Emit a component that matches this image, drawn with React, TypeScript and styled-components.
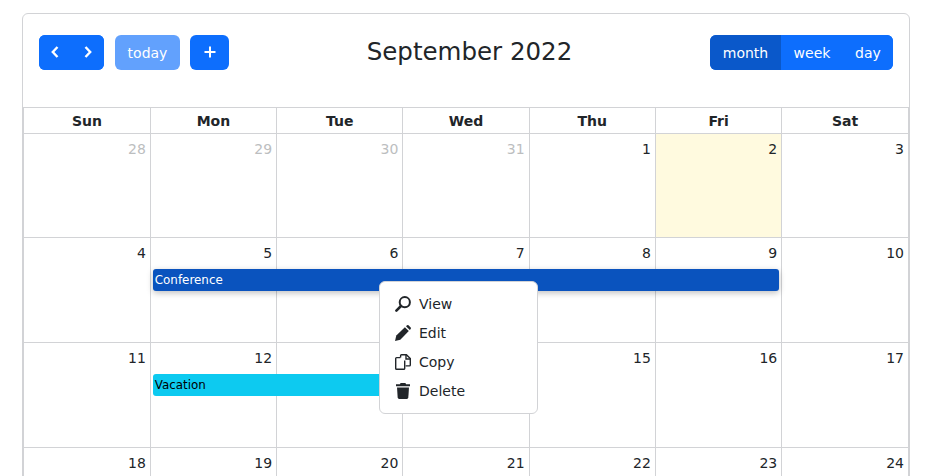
import React from 'react';
import styled, { createGlobalStyle } from 'styled-components';

const GlobalStyle = createGlobalStyle`
  html, body {
    margin: 0;
    height: 476px;
    overflow: hidden;
    background: #fff;
    font-family: 'DejaVu Sans', sans-serif;
    color: #212529;
  }
`;

const weeks = [
  [28, 29, 30, 31, 1, 2, 3],
  [4, 5, 6, 7, 8, 9, 10],
  [11, 12, 13, 14, 15, 16, 17],
  [18, 19, 20, 21, 22, 23, 24],
];
const dayNames = ['Sun', 'Mon', 'Tue', 'Wed', 'Thu', 'Fri', 'Sat'];

// table columns snap unevenly in the original, first and last take up the slack
const columns = '125.8px repeat(5, 126.29px) 1fr';
const line = '#d2d3d6';

const ChevronLeft = () => (
  <svg width="10" height="14" viewBox="0 0 10 14" fill="none" stroke="currentColor" strokeWidth="2.4">
    <path d="M7.5 2 L2.8 7 L7.5 12" />
  </svg>
);
const ChevronRight = () => (
  <svg width="10" height="14" viewBox="0 0 10 14" fill="none" stroke="currentColor" strokeWidth="2.4">
    <path d="M2.5 2 L7.2 7 L2.5 12" />
  </svg>
);
const Plus = () => (
  <svg width="12" height="12" viewBox="0 0 12 12" stroke="currentColor" strokeWidth="2">
    <path d="M6 0.5 V11.5 M0.5 6 H11.5" />
  </svg>
);
const SearchIcon = () => (
  <svg viewBox="0 0 16 16" fill="none" stroke="#212529">
    <circle cx="9.8" cy="6.2" r="5.1" strokeWidth="2" />
    <path d="M6 10 L1.4 14.6" strokeWidth="2.6" strokeLinecap="round" />
  </svg>
);
const PencilIcon = () => (
  <svg viewBox="0 0 16 16" fill="#212529">
    <path d="M0 16 L1.3 10.6 L9.9 2.2 L13.8 6.1 L5.3 14.7 Z" />
    <path d="M11 1.2 L12 0.3 Q12.8 -0.2 13.5 0.3 L15.7 2.5 Q16.2 3.2 15.7 3.9 L14.8 4.9 Z" />
  </svg>
);
const CopyIcon = () => (
  <svg viewBox="0 0 16 16" fill="none" stroke="#212529" strokeWidth="1.4">
    <path d="M5.6 3.4 V1.6 Q5.6 0.7 6.5 0.7 H11.4 L15.3 4.6 V11 Q15.3 11.9 14.4 11.9 H10.6" />
    <path d="M11 0.9 V5 H15.2" />
    <path d="M5.4 3.6 H1.6 Q0.7 3.6 0.7 4.5 V14.4 Q0.7 15.3 1.6 15.3 H8.8 Q9.7 15.3 9.7 14.4 V6.6" />
  </svg>
);
const TrashIcon = () => (
  <svg viewBox="0 0 16 16" fill="#212529">
    <path d="M5.6 0 H10.4 L11.1 1.3 H15 V3.2 H1 V1.3 H4.9 Z" />
    <path d="M2 4.4 H14 L13.3 14.6 Q13.2 16 11.8 16 H4.2 Q2.8 16 2.7 14.6 Z" />
  </svg>
);

const App = () => {
  return (
    <>
      <GlobalStyle />
      <Card>
        <Toolbar>
          <ToolGroup>
            <ButtonGroup>
              <IconButton><ChevronLeft /></IconButton>
              <IconButton><ChevronRight /></IconButton>
            </ButtonGroup>
            <TodayButton>today</TodayButton>
            <AddButton><Plus /></AddButton>
          </ToolGroup>
          <Title>September 2022</Title>
          <ButtonGroup>
            <ViewButton $width={71} $active>month</ViewButton>
            <ViewButton $width={62}>week</ViewButton>
            <ViewButton $width={50}>day</ViewButton>
          </ButtonGroup>
        </Toolbar>
        <Calendar>
          <HeaderRow>
            {dayNames.map((d) => (
              <HeaderCell key={d}>{d}</HeaderCell>
            ))}
          </HeaderRow>
          {weeks.map((days, w) => (
            <Week key={w}>
              {days.map((d, i) => (
                <DayCell
                  key={d}
                  $col={i + 1}
                  $today={w === 0 && d === 2}
                  $muted={w === 0 && d > 20}
                >
                  {d}
                </DayCell>
              ))}
              {w === 1 && <EventBar $start={2} $span={5} $kind="conference">Conference</EventBar>}
              {w === 2 && <EventBar $start={2} $span={3} $kind="vacation">Vacation</EventBar>}
            </Week>
          ))}
        </Calendar>
        <Menu>
          <MenuItem><SearchIcon />View</MenuItem>
          <MenuItem><PencilIcon />Edit</MenuItem>
          <MenuItem><CopyIcon />Copy</MenuItem>
          <MenuItem><TrashIcon />Delete</MenuItem>
        </Menu>
      </Card>
    </>
  );
};

export default App;

const Card = styled.div`
  position: relative;
  box-sizing: border-box;
  width: 888px;
  margin: 13px 0 0 22px;
  border: 1px solid ${line};
  border-radius: 6px;
  background: #fff;
`;
const Toolbar = styled.div`
  display: flex;
  align-items: center;
  justify-content: space-between;
  box-sizing: border-box;
  height: 93px;
  padding: 0 16px 17px;
`;
const ToolGroup = styled.div`
  display: flex;
  align-items: center;
  gap: 10px;
`;
const ButtonGroup = styled.div`
  display: flex;
  height: 35px;
  border-radius: 6px;
  overflow: hidden;
  background: #0d6efd;
`;
const BaseButton = styled.button`
  border: 0;
  padding: 1px 0 0;
  height: 35px;
  color: #fff;
  font-family: inherit;
  font-size: 14px;
  display: flex;
  align-items: center;
  justify-content: center;
`;
const IconButton = styled(BaseButton)`
  width: 32.5px;
  padding: 0;
  background: #0d6efd;
`;
const TodayButton = styled(BaseButton)`
  width: 65px;
  border-radius: 6px;
  background: #62a1fd;
  margin-left: 1px;
`;
const AddButton = styled(BaseButton)`
  width: 39px;
  padding: 0;
  border-radius: 6px;
  background: #0d6efd;
`;
const ViewButton = styled(BaseButton)<{ $active?: boolean; $width: number }>`
  width: ${(p) => p.$width}px;
  background: ${(p) => (p.$active ? '#0a58ca' : '#0d6efd')};
`;
const Title = styled.h2`
  margin: 0 0 2px;
  font-size: 24.5px;
  font-weight: 400;
  color: #212529;
`;
const Calendar = styled.div`
  border-left: 1px solid ${line};
  border-right: 1px solid ${line};
`;
const HeaderRow = styled.div`
  display: grid;
  grid-template-columns: ${columns};
  height: 26.67px;
  border-top: 1px solid ${line};
  border-bottom: 1px solid ${line};
  box-sizing: border-box;
`;
const HeaderCell = styled.div`
  display: flex;
  align-items: center;
  justify-content: center;
  padding-top: 2px;
  font-size: 14px;
  font-weight: 700;
  & + & {
    border-left: 1px solid ${line};
  }
`;
const Week = styled.div`
  display: grid;
  grid-template-columns: ${columns};
  grid-template-rows: 30.7px 22px 1fr;
  height: 104.67px;
  box-sizing: border-box;
  border-bottom: 1px solid ${line};
`;
const DayCell = styled.div<{ $col: number; $today?: boolean; $muted?: boolean }>`
  grid-row: 1 / 4;
  grid-column: ${(p) => p.$col};
  padding: 6px 4px 0 0;
  text-align: right;
  font-size: 14px;
  line-height: 19px;
  color: ${(p) => (p.$muted ? '#bcbebf' : '#212529')};
  background: ${(p) => (p.$today ? '#fffadf' : 'transparent')};
  &:not(:first-child) {
    border-left: 1px solid ${line};
  }
`;
const EventBar = styled.div<{ $start: number; $span: number; $kind: 'conference' | 'vacation' }>`
  grid-row: 2;
  grid-column: ${(p) => p.$start} / span ${(p) => p.$span};
  margin: 0 2px 0 3px;
  padding: 0 2px;
  border-radius: 3px;
  font-size: 11.9px;
  line-height: 22px;
  color: ${(p) => (p.$kind === 'conference' ? '#fff' : '#000')};
  background: ${(p) => (p.$kind === 'conference' ? '#0a53be' : '#0dcaf0')};
  box-shadow: ${(p) => (p.$kind === 'conference' ? '0 2px 6px rgba(0,0,0,0.25)' : 'none')};
`;
const Menu = styled.div`
  position: absolute;
  left: 356px;
  top: 267px;
  box-sizing: border-box;
  width: 159px;
  height: 133px;
  padding: 7px 0;
  background: #fff;
  border: 1px solid ${line};
  border-radius: 6px;
`;
const MenuItem = styled.div`
  display: flex;
  align-items: center;
  gap: 8px;
  height: 29px;
  padding-left: 15px;
  font-size: 14px;
  color: #212529;

  svg {
    width: 16px;
    height: 16px;
  }
`;
